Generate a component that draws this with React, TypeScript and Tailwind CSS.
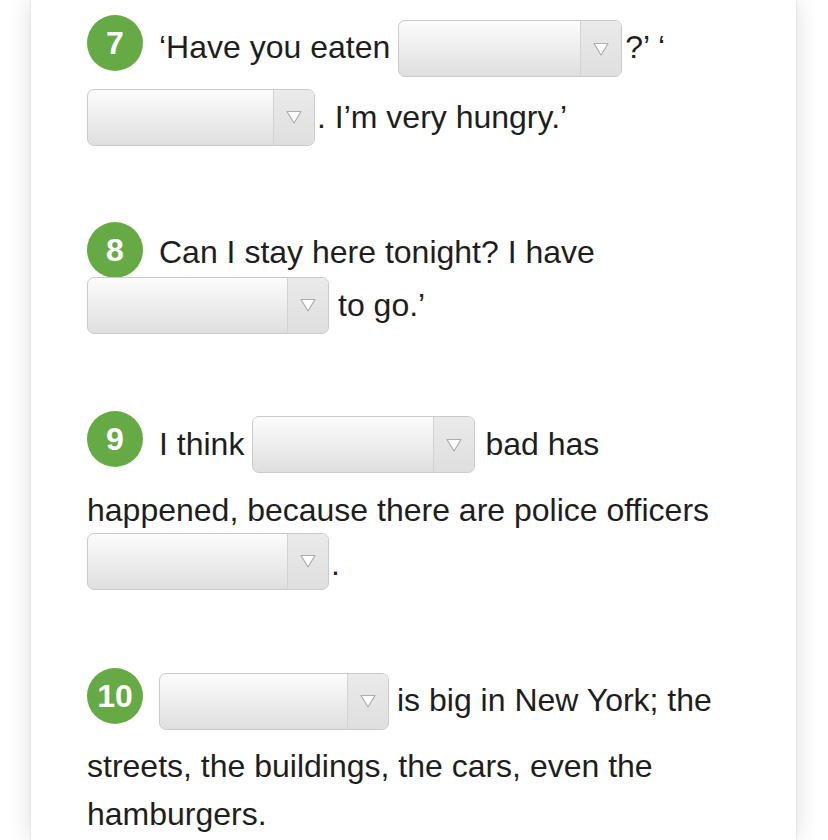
import React from "react";

// one blank drop-down, as in the gap-fill exercise
function Blank({ w }: { w: string }) {
  return (
    <div
      className={`${w} h-[57px] shrink-0 flex rounded-[7px] border border-[#cacaca] bg-gradient-to-b from-[#fcfcfc] to-[#dfdfdf] overflow-hidden`}
    >
      <div className="flex-1" />
      <div className="w-[41px] flex items-center justify-center border-l border-[#d2d2d2] bg-gradient-to-b from-[#eaeaea] to-[#dfdfdf]">
        <svg width="16" height="14" viewBox="0 0 16 14">
          <path d="M1 1.5 L15 1.5 L8 13 Z" fill="#ffffff" stroke="#adadad" strokeWidth="1.2" strokeLinejoin="round" />
        </svg>
      </div>
    </div>
  );
}

function Num({ n, className = "" }: { n: number; className?: string }) {
  return (
    <div
      className={`w-[56px] h-[56px] shrink-0 rounded-full bg-[#66aa45] text-white font-bold text-[32px] leading-none flex items-center justify-center ${className}`}
    >
      {n}
    </div>
  );
}

function T({ children, className = "" }: { children: React.ReactNode; className?: string }) {
  return <span className={`whitespace-pre leading-none ${className}`}>{children}</span>;
}

export default function App() {
  return (
    <div className="min-h-[840px] bg-white overflow-hidden" style={{ fontFamily: '"Liberation Sans", Arial, sans-serif' }}>
      <div className="ml-[30px] w-[767px] min-h-[840px] bg-white border-x border-[#e6e6e6] shadow-[0_0_22px_rgba(0,0,0,0.13)] pl-[56px] pt-[20px] text-[32px] text-[#1e1e1e]">
        {/* 7 */}
        <div className="h-[57px] flex items-center">
          <Num n={7} className="self-start -mt-[5px]" />
          <T className="ml-[16px] -mt-[3px]">‘Have you eaten</T>
          <div className="ml-[8px]">
            <Blank w="w-[224px]" />
          </div>
          <T className="ml-[3px] -mt-[3px]">?’ ‘</T>
        </div>
        <div className="mt-[11px] h-[58px] flex items-center">
          <Blank w="w-[228px]" />
          <T className="ml-[2px]">. I’m very hungry.’</T>
        </div>

        {/* 8 */}
        <div className="mt-[76px] h-[56px] flex items-center">
          <Num n={8} />
          <T className="ml-[16px] mt-[4px]">Can I stay here tonight? I have</T>
        </div>
        <div className="-mt-[1px] h-[56px] flex items-center">
          <Blank w="w-[242px]" />
          <T className="ml-[9px]">to go.’</T>
        </div>

        {/* 9 */}
        <div className="mt-[83px] h-[57px] flex items-center">
          <Num n={9} className="self-start -mt-[5px]" />
          <T className="ml-[16px] -mt-[2px]">I think</T>
          <div className="ml-[8px]">
            <Blank w="w-[223px]" />
          </div>
          <T className="ml-[10px] -mt-[2px]">bad has</T>
        </div>
        <div className="mt-[13px] h-[48px] flex items-center">
          <T>happened, because there are police officers</T>
        </div>
        <div className="-mt-[2px] h-[58px] flex items-center">
          <Blank w="w-[242px]" />
          <T className="ml-[2px] mt-[6px]">.</T>
        </div>

        {/* 10 */}
        <div className="mt-[82px] h-[58px] flex items-center">
          <Num n={10} className="self-start -mt-[4px]" />
          <div className="ml-[16px]">
            <Blank w="w-[230px]" />
          </div>
          <T className="ml-[8px] -mt-[2px]">is big in New York; the</T>
        </div>
        <div className="mt-[12px] h-[48px] flex items-center">
          <T>streets, the buildings, the cars, even the</T>
        </div>
        <div className="h-[48px] flex items-center">
          <T>hamburgers.</T>
        </div>
      </div>
    </div>
  );
}
